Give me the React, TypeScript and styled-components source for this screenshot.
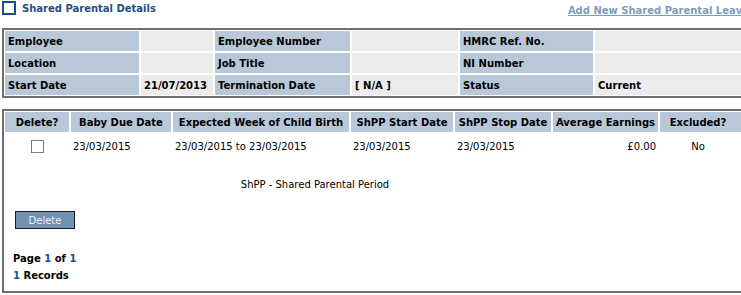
import styled, { createGlobalStyle } from "styled-components";

const GlobalStyle = createGlobalStyle`
body {
  margin: 0;
  overflow: hidden;
  background: #fff;
  font-family: "DejaVu Sans", Verdana, sans-serif;
  font-size: 10px;
  color: #000;
}
`;

const Page = styled.div`
width: 745px;
padding: 1px 0 0 2px;
`;

const Header = styled.div`
display: flex;
justify-content: space-between;
align-items: flex-start;
width: 747px;
height: 27px;
`;

const TitleGroup = styled.div`
display: flex;
align-items: center;
gap: 6px;
`;

const TitleBox = styled.span`
width: 10px;
height: 10px;
border: 2px solid #1c4f86;
background: #fff;
`;

const Title = styled.span`
font-weight: bold;
color: #1f4f82;
`;

const AddLink = styled.a`
margin-top: 4px;
font-weight: bold;
color: #7b9dc1;
text-decoration: underline;
white-space: nowrap;
cursor: pointer;
`;

const Panel = styled.div<{ $top?: number }>`
border: 2px solid #6f6f6f;
margin-top: ${(p) => p.$top ?? 0}px;
`;

const Grid = styled.div<{ $cols: string }>`
display: grid;
grid-template-columns: ${(p) => p.$cols};
gap: 2px;
padding: 1px;
`;

const Cell = styled.div<{ $label?: boolean }>`
height: 20px;
display: flex;
align-items: center;
padding: 0 3px;
white-space: nowrap;
overflow: hidden;
font-weight: bold;
background: ${(p) => (p.$label ? "#b8c8d8" : "#ececec")};
`;

const HeadCell = styled.div<{ $shift?: number }>`
height: 20px;
display: flex;
align-items: center;
justify-content: center;
padding-right: ${(p) => p.$shift ?? 0}px;
white-space: nowrap;
font-weight: bold;
background: #b8c8d8;
`;

const DataCell = styled.div<{ $align?: string; $shift?: number }>`
height: 24px;
display: flex;
align-items: center;
justify-content: ${(p) => p.$align ?? "flex-start"};
padding: 0 ${(p) => 2 + (p.$shift ?? 0)}px 0 2px;
white-space: nowrap;
`;

const Tick = styled.span`
width: 11px;
height: 11px;
border: 1px solid #7a7a7a;
background: #fff;
`;

const Note = styled.div`
width: 622px;
text-align: center;
margin-top: 20px;
`;

const Actions = styled.div`
padding: 21px 0 0 11px;
`;

const DeleteButton = styled.button`
display: block;
width: 60px;
height: 18px;
padding: 0;
border: 1px solid #1a1a1a;
background: #7191b0;
color: #eef2f6;
font-family: inherit;
font-size: 10px;
`;

const Pager = styled.div`
padding: 21px 0 7px 9px;
font-weight: bold;
line-height: 17px;
`;

const Num = styled.span`
color: #0b5394;
`;

const infoRows = [
  ["Employee", "", "Employee Number", "", "HMRC Ref. No.", ""],
  ["Location", "", "Job Title", "", "NI Number", ""],
  ["Start Date", "21/07/2013", "Termination Date", "[ N/A ]", "Status", "Current"],
];

const headers = [
  "Delete?",
  "Baby Due Date",
  "Expected Week of Child Birth",
  "ShPP Start Date",
  "ShPP Stop Date",
  "Average Earnings",
  "Excluded?",
];

const App = () => {
  return (
    <>
      <GlobalStyle />
      <Page>
        <Header>
          <TitleGroup>
            <TitleBox />
            <Title>Shared Parental Details</Title>
          </TitleGroup>
          <AddLink>Add New Shared Parental Leave</AddLink>
        </Header>

        <Panel>
          <Grid $cols="134px 72px 135px 106px 133px 1fr">
            {infoRows.map((row) =>
              row.map((text, i) => (
                <Cell key={row[0] + i} $label={i % 2 === 0}>
                  {text}
                </Cell>
              ))
            )}
          </Grid>
        </Panel>

        <Panel $top={11}>
          <Grid $cols="64px 100px 176px 102px 96px 105px 1fr">
            {headers.map((h, i) => (
              <HeadCell key={h} $shift={i === 6 ? 8 : 0}>
                {h}
              </HeadCell>
            ))}
            <DataCell $align="center">
              <Tick />
            </DataCell>
            <DataCell>23/03/2015</DataCell>
            <DataCell>23/03/2015 to 23/03/2015</DataCell>
            <DataCell>23/03/2015</DataCell>
            <DataCell>23/03/2015</DataCell>
            <DataCell $align="flex-end">£0.00</DataCell>
            <DataCell $align="center" $shift={8}>
              No
            </DataCell>
          </Grid>
          <Note>ShPP - Shared Parental Period</Note>
          <Actions>
            <DeleteButton>Delete</DeleteButton>
          </Actions>
          <Pager>
            <div>
              Page <Num>1</Num> of <Num>1</Num>
            </div>
            <div>
              <Num>1</Num> Records
            </div>
          </Pager>
        </Panel>
      </Page>
    </>
  );
};

export default App;
